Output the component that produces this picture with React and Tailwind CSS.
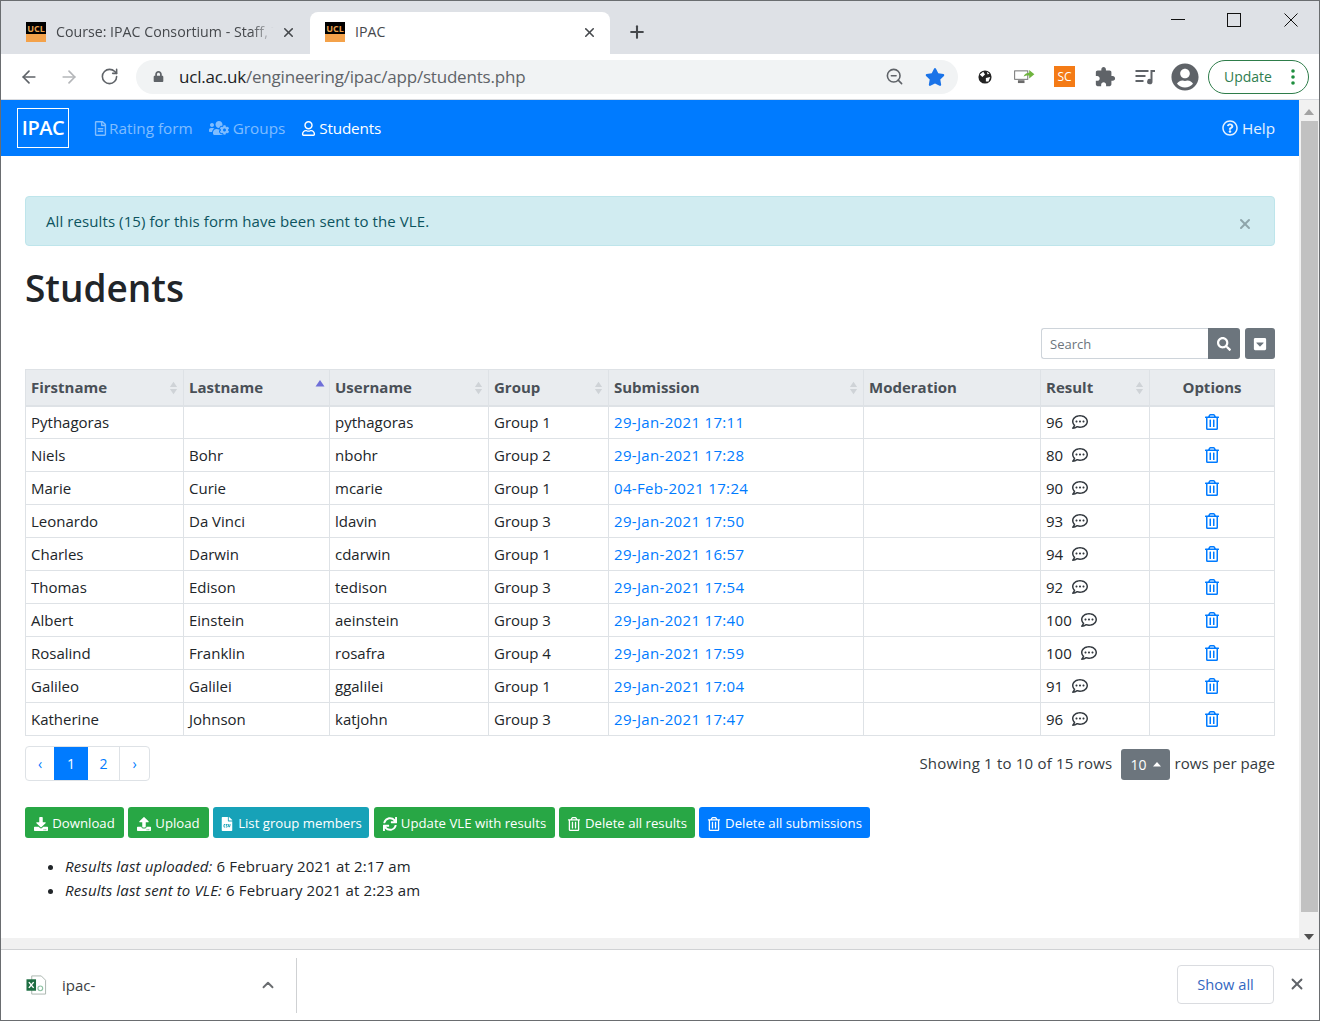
import {
  FaDownload,
  FaUpload,
  FaFileCsv,
  FaSync,
  FaRegTrashAlt,
  FaRegCommentDots,
  FaRegQuestionCircle,
  FaRegFileAlt,
  FaUsersCog,
  FaRegUser,
  FaSearch,
  FaCaretSquareDown,
  FaUserCircle,
  FaStar,
  FaLock,
} from "react-icons/fa";
import { ArrowLeft, ArrowRight, RotateCw, ZoomOut, X, Plus, ChevronUp } from "lucide-react";

const rows = [
  ["Pythagoras", "", "pythagoras", "Group 1", "29-Jan-2021 17:11", "96"],
  ["Niels", "Bohr", "nbohr", "Group 2", "29-Jan-2021 17:28", "80"],
  ["Marie", "Curie", "mcarie", "Group 1", "04-Feb-2021 17:24", "90"],
  ["Leonardo", "Da Vinci", "ldavin", "Group 3", "29-Jan-2021 17:50", "93"],
  ["Charles", "Darwin", "cdarwin", "Group 1", "29-Jan-2021 16:57", "94"],
  ["Thomas", "Edison", "tedison", "Group 3", "29-Jan-2021 17:54", "92"],
  ["Albert", "Einstein", "aeinstein", "Group 3", "29-Jan-2021 17:40", "100"],
  ["Rosalind", "Franklin", "rosafra", "Group 4", "29-Jan-2021 17:59", "100"],
  ["Galileo", "Galilei", "ggalilei", "Group 1", "29-Jan-2021 17:04", "91"],
  ["Katherine", "Johnson", "katjohn", "Group 3", "29-Jan-2021 17:47", "96"],
];

const columns = [
  { label: "Firstname", width: "w-[158px]", sort: "both" },
  { label: "Lastname", width: "w-[146px]", sort: "asc" },
  { label: "Username", width: "w-[159px]", sort: "both" },
  { label: "Group", width: "w-[120px]", sort: "both" },
  { label: "Submission", width: "w-[255px]", sort: "both" },
  { label: "Moderation", width: "w-[177px]" },
  { label: "Result", width: "w-[109px]", sort: "both" },
  { label: "Options", width: "w-[125px]", center: true },
];

function Favicon() {
  return (
    <div className="w-5 h-5 flex flex-col shrink-0 overflow-hidden">
      <div className="h-[12px] bg-black text-[#e9a14c] text-[9px] leading-[13px] font-bold text-center">UCL</div>
      <div className="flex-1 bg-[#f4a24a]" />
    </div>
  );
}

function SortArrows({ sort }) {
  if (sort === "asc") {
    return (
      <svg viewBox="0 0 10 12" className="absolute right-[4px] top-[9px] w-[10px] h-[12px]">
        <path d="M5 1 L9.5 7.5 H0.5 Z" fill="#6f6fd8" />
      </svg>
    );
  }
  return (
    <svg viewBox="0 0 10 16" className="absolute right-[5px] top-[10px] w-[9px] h-[16px]">
      <path d="M5 1 L9 7 H1 Z M5 15 L1 9 H9 Z" fill="#cfd3d7" />
    </svg>
  );
}

function ActionButton({ icon: Icon, color, width, children }) {
  return (
    <button className={`${color} ${width} h-[31px] pt-[2px] rounded-[3px] text-white text-[13.2px] flex items-center justify-center gap-[4px] whitespace-nowrap`}>
      <Icon className="text-[14px] shrink-0" />
      {children}
    </button>
  );
}

export default function App() {
  return (
    <div className="w-[1320px] h-[1021px] border border-[#6a6d70] bg-white flex flex-col overflow-hidden text-[#212529] font-['Open_Sans',sans-serif]">
      {/* tab strip */}
      <div className="h-[53px] shrink-0 bg-[#dee1e6] flex items-end">
        <div className="w-[309px] h-[42px] flex items-center pl-[25px] pr-[14px] pb-[2px]">
          <Favicon />
          <span className="ml-[10px] w-[222px] whitespace-nowrap text-[14.2px] text-[#45484c] [mask-image:linear-gradient(to_right,black_88%,transparent_98%)]">Course: IPAC Consortium - Staff, T</span>
          <X size={15} strokeWidth={2.5} className="ml-auto text-[#45484c]" />
        </div>
        <div className="w-[300px] h-[42px] bg-white rounded-t-[8px] flex items-center pl-[15px] pr-[13px] pb-[2px]">
          <Favicon />
          <span className="ml-[10px] text-[14.2px] text-[#45484c]">IPAC</span>
          <X size={15} strokeWidth={2.5} className="ml-auto text-[#45484c]" />
        </div>
        <Plus size={20} strokeWidth={2.5} className="ml-[17px] mb-[12px] text-[#45484c]" />
        {/* window controls */}
        <div className="ml-auto self-start pt-[12px] pr-[21px] flex items-start gap-[42px]">
          <svg viewBox="0 0 14 14" className="w-[14px] h-[14px]"><path d="M0 6.5 H14" stroke="#111" strokeWidth="1" /></svg>
          <svg viewBox="0 0 14 14" className="w-[14px] h-[14px] mr-[1px]"><rect x="0.5" y="0.5" width="13" height="13" fill="none" stroke="#111" strokeWidth="1" /></svg>
          <svg viewBox="0 0 14 14" className="w-[14px] h-[14px]"><path d="M0.5 0.5 L13.5 13.5 M13.5 0.5 L0.5 13.5" stroke="#111" strokeWidth="1" /></svg>
        </div>
      </div>

      {/* toolbar */}
      <div className="h-[46px] shrink-0 bg-white flex items-center border-b border-[#dadce0] pl-[18px] pr-[10px]">
        <ArrowLeft size={20} strokeWidth={2} className="shrink-0 text-[#5f6368]" />
        <ArrowRight size={20} strokeWidth={2} className="shrink-0 ml-[20px] text-[#b4b6b9]" />
        <RotateCw size={19} strokeWidth={2} className="shrink-0 ml-[21px] text-[#5f6368]" />
        <div className="ml-[17px] flex-1 h-[34px] rounded-full bg-[#f1f3f4] flex items-center pl-[17px] pr-[13px]">
          <FaLock className="text-[11px] text-[#5f6368]" />
          <span className="ml-[15px] text-[17px] text-[#5f6368] tracking-[-0.2px]">
            <span className="text-[#202124]">ucl.ac.uk</span>/engineering/ipac/app/students.php
          </span>
          <ZoomOut size={19} className="ml-auto text-[#5f6368]" />
          <FaStar className="ml-[21px] text-[20px] text-[#1a73e8]" />
        </div>
        <svg viewBox="0 0 16 16" className="shrink-0 ml-[20px] w-[14px] h-[14px]">
          <circle cx="8" cy="8" r="7.5" fill="#222" />
          <path d="M2 5 L6 2 L8 5 L5 8 Z M9 9 L14 8 L12 13 L9 13 Z M10 2 L13 4 L11 5 Z" fill="#fff" />
        </svg>
        <svg viewBox="0 0 22 16" className="shrink-0 ml-[22px] w-[21px] h-[15px]">
          <rect x="0.5" y="2" width="14" height="9" fill="#fff" stroke="#6b6b6b" />
          <rect x="4" y="12" width="7" height="3" fill="#6b6b6b" />
          <path d="M10 8 C11 5 14 4 16 4 V1 L21.5 5.5 L16 10 V7 C14 7 12 7 10 8 Z" fill="#6fb43f" />
        </svg>
        <div className="shrink-0 ml-[19px] w-[21px] h-[21px] bg-[#f47b16] text-white text-[12px] leading-[21px] text-center">SC</div>
        <svg viewBox="0 0 24 24" className="shrink-0 ml-[19px] w-[22px] h-[22px]" fill="#5f6368">
          <path d="M20.5 11H19V7c0-1.1-.9-2-2-2h-4V3.5C13 2.12 11.88 1 10.5 1S8 2.12 8 3.5V5H4c-1.1 0-1.99.9-1.99 2v3.8H3.5c1.49 0 2.7 1.21 2.7 2.7s-1.21 2.7-2.7 2.7H2V20c0 1.1.9 2 2 2h3.8v-1.5c0-1.49 1.21-2.7 2.7-2.7 1.49 0 2.7 1.21 2.7 2.7V22H17c1.1 0 2-.9 2-2v-4h1.5c1.38 0 2.5-1.12 2.5-2.5S21.88 11 20.5 11z" />
        </svg>
        <svg viewBox="0 0 20 16" className="shrink-0 ml-[19px] w-[21px] h-[16px]" fill="#5f6368">
          <rect x="0" y="1" width="13" height="2" />
          <rect x="0" y="6" width="10" height="2" />
          <rect x="0" y="11" width="8" height="2" />
          <path d="M15 1 H19.5 V3 H17 V12.5 A2.7 2.7 0 1 1 15 10 Z" />
        </svg>
        <FaUserCircle className="shrink-0 ml-[15px] text-[28px] text-[#5f6368]" />
        <div className="shrink-0 ml-[9px] w-[101px] h-[34px] rounded-full border border-[#2e7d4a] flex items-center pl-[15px] pr-[13px] text-[14px] text-[#2f7d4f]">
          Update
          <svg viewBox="0 0 4 16" className="ml-auto w-[4px] h-[16px]" fill="#1e8e3e">
            <circle cx="2" cy="2" r="1.8" />
            <circle cx="2" cy="8" r="1.8" />
            <circle cx="2" cy="14" r="1.8" />
          </svg>
        </div>
      </div>

      {/* page + scrollbar */}
      <div className="h-[849px] shrink-0 flex">
        <div className="w-[1298px] shrink-0 flex flex-col">
          <nav className="h-[56px] shrink-0 bg-[#007bff] flex items-center pl-[16px] pr-[24px] text-[15.3px]">
            <div className="w-[52px] h-[40px] border border-white text-white text-[20px] font-semibold flex items-center justify-center tracking-[-0.5px]">IPAC</div>
            <span className="ml-[24px] flex items-center gap-[1px] text-white/50">
              <FaRegFileAlt className="text-[15px]" /> Rating form
            </span>
            <span className="ml-[16px] flex items-center gap-[4px] text-white/50">
              <FaUsersCog className="text-[20px]" /> Groups
            </span>
            <span className="ml-[16px] flex items-center gap-[3px] text-white tracking-[-0.2px]">
              <FaRegUser className="text-[15px]" /> Students
            </span>
            <span className="ml-auto flex items-center gap-[4px] text-white/90">
              <FaRegQuestionCircle className="text-[16px]" /> Help
            </span>
          </nav>

          <main className="pl-[24px] pr-[24px] flex-1">
            <div className="mt-[40px] h-[50px] rounded-[4px] border border-[#bee5eb] bg-[#d1ecf1] text-[#0c5460] flex items-center pl-[20px] pr-[21px] text-[15px] tracking-[0.09px]">
              All results (15) for this form have been sent to the VLE.
              <X size={16} strokeWidth={3} className="ml-auto mt-[5px] text-[#8fa5aa]" />
            </div>

            <h1 className="mt-[17px] text-[37px] leading-[50px] font-semibold text-[#212529]">Students</h1>

            <div className="mt-[15px] h-[31px] flex justify-end">
              <div className="w-[167px] h-[31px] border border-[#ced4da] rounded-l-[3px] border-r-0 flex items-center pl-[8px] pt-[2px] text-[13px] text-[#6c757d]">Search</div>
              <div className="w-[32px] h-[31px] bg-[#6c757d] rounded-r-[3px] flex items-center justify-center text-white text-[14px]">
                <FaSearch />
              </div>
              <div className="ml-[5px] w-[30px] h-[31px] bg-[#6c757d] rounded-[3px] flex items-center justify-center text-white text-[14px]">
                <FaCaretSquareDown />
              </div>
            </div>

            <table className="mt-[10px] w-[1249px] table-fixed border-collapse text-[15px]">
              <thead>
                <tr className="h-[36px] bg-[#e9ecef] text-[#495057]">
                  {columns.map((col) => (
                    <th
                      key={col.label}
                      className={`${col.width} relative border border-[#dee2e6] border-b-2 px-[5px] font-bold ${col.center ? "text-center" : "text-left"}`}
                    >
                      {col.label}
                      {col.sort && <SortArrows sort={col.sort} />}
                    </th>
                  ))}
                </tr>
              </thead>
              <tbody>
                {rows.map((r) => (
                  <tr key={r[2]} className="h-[33px]">
                    <td className="border border-[#dee2e6] px-[5px]">{r[0]}</td>
                    <td className="border border-[#dee2e6] px-[5px]">{r[1]}</td>
                    <td className="border border-[#dee2e6] px-[5px]">{r[2]}</td>
                    <td className="border border-[#dee2e6] px-[5px]">{r[3]}</td>
                    <td className="border border-[#dee2e6] px-[5px] text-[#007bff] tracking-[0.33px]">{r[4]}</td>
                    <td className="border border-[#dee2e6] px-[5px]" />
                    <td className="border border-[#dee2e6] px-[5px]">
                      <span className="flex items-center gap-[9px]">
                        {r[5]} <FaRegCommentDots className="text-[16px] text-[#343a40]" />
                      </span>
                    </td>
                    <td className="border border-[#dee2e6] px-[5px]">
                      <FaRegTrashAlt className="mx-auto text-[16px] text-[#007bff]" />
                    </td>
                  </tr>
                ))}
              </tbody>
            </table>

            <div className="mt-[10px] h-[35px] flex items-center">
              <div className="flex h-[35px] border border-[#dee2e6] rounded-[4px] text-[14px] text-[#007bff]">
                <span className="w-[28px] flex items-center justify-center">‹</span>
                <span className="w-[34px] flex items-center justify-center bg-[#007bff] text-white">1</span>
                <span className="w-[32px] flex items-center justify-center border-r border-[#dee2e6]">2</span>
                <span className="w-[29px] flex items-center justify-center">›</span>
              </div>
              <span className="ml-auto text-[15px] text-[#343a40] tracking-[0.2px]">Showing 1 to 10 of 15 rows</span>
              <span className="ml-[9px] w-[49px] h-[31px] mt-[2px] bg-[#6c757d] rounded-[3px] text-white text-[14px] flex items-center justify-center gap-[7px]">
                10
                <svg viewBox="0 0 8 5" className="w-[8px] h-[5px]">
                  <path d="M4 0 L8 4.5 H0 Z" fill="#fff" />
                </svg>
              </span>
              <span className="ml-[4px] text-[15px] text-[#343a40] tracking-[0.08px]">rows per page</span>
            </div>

            <div className="mt-[26px] flex gap-[4px]">
              <ActionButton icon={FaDownload} color="bg-[#28a745]" width="w-[99px]">Download</ActionButton>
              <ActionButton icon={FaUpload} color="bg-[#28a745]" width="w-[81px]">Upload</ActionButton>
              <ActionButton icon={FaFileCsv} color="bg-[#17a2b8]" width="w-[156px]">List group members</ActionButton>
              <ActionButton icon={FaSync} color="bg-[#28a745] ml-[1px]" width="w-[181px]">Update VLE with results</ActionButton>
              <ActionButton icon={FaRegTrashAlt} color="bg-[#28a745]" width="w-[136px]">Delete all results</ActionButton>
              <ActionButton icon={FaRegTrashAlt} color="bg-[#007bff]" width="w-[171px]">Delete all submissions</ActionButton>
            </div>

            <ul className="mt-[16px] ml-[40px] list-disc text-[15px] leading-[24px] tracking-[0.14px]">
              <li><em>Results last uploaded:</em> 6 February 2021 at 2:17 am</li>
              <li><em>Results last sent to VLE:</em> 6 February 2021 at 2:23 am</li>
            </ul>
          </main>

          <div className="h-[11px] shrink-0 bg-[#f1f1f1]" />
        </div>

        {/* scrollbar */}
        <div className="w-[20px] shrink-0 bg-[#f1f1f1] flex flex-col items-center">
          <svg viewBox="0 0 10 6" className="mt-[9px] w-[10px] h-[6px]">
            <path d="M5 0 L10 6 H0 Z" fill="#a3a3a3" />
          </svg>
          <div className="mt-[6px] w-[17px] h-[791px] bg-[#c1c1c1]" />
          <svg viewBox="0 0 10 6" className="mt-[22px] w-[10px] h-[6px]">
            <path d="M5 6 L0 0 H10 Z" fill="#505050" />
          </svg>
        </div>
      </div>

      {/* download bar */}
      <div className="flex-1 bg-white border-t border-[#d0d2d4] flex items-center pl-[25px] pr-[13px]">
        <svg viewBox="0 0 22 20" className="w-[21px] h-[20px]">
          <path d="M6 0.5 H16 L20.5 5 V19.5 H6 Z" fill="#fff" stroke="#a9b4ae" />
          <rect x="0.5" y="4" width="10" height="12" fill="#1e6e42" />
          <path d="M3 7 L8 13 M8 7 L3 13" stroke="#fff" strokeWidth="1.5" />
          <circle cx="15" cy="13.5" r="2.5" fill="none" stroke="#8cc2a2" strokeWidth="1.2" />
        </svg>
        <span className="ml-[15px] text-[15px] text-[#3c4043]">ipac-</span>
        <ChevronUp size={18} strokeWidth={2.5} className="ml-[164px] text-[#6a6d70]" />
        <div className="ml-[19px] w-px h-[55px] bg-[#cfd1d3]" />
        <div className="ml-auto mb-[2px] w-[97px] h-[39px] border border-[#dadce0] rounded-[4px] flex items-center justify-center text-[14.7px] text-[#3367c1]">Show all</div>
        <X size={18} strokeWidth={2.5} className="ml-[14px] mb-[2px] text-[#5f6368]" />
      </div>
    </div>
  );
}
